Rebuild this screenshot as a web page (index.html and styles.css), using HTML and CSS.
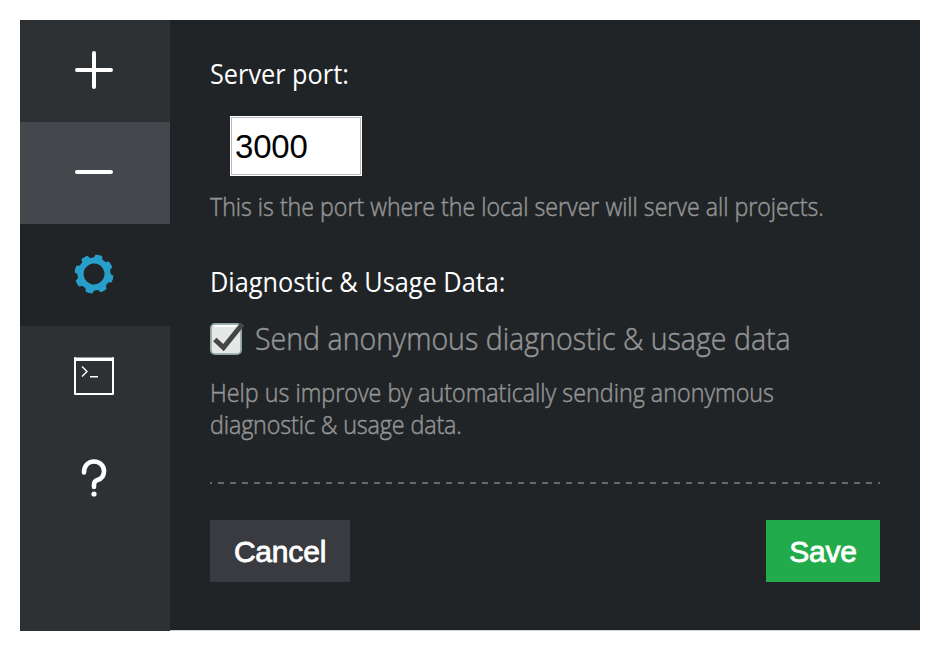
FILE: index.html
```html
<!DOCTYPE html>
<html lang="en">
<head>
<meta charset="utf-8">
<title>Settings</title>
<link rel="stylesheet" href="styles.css">
</head>
<body>
<div class="panel">
  <nav class="sidebar">
    <a class="tab"><svg width="40" height="40" viewBox="0 0 40 40"><path class="stroke bold" d="M20 3V37M3 20H37"/></svg></a>
    <a class="tab hover"><svg width="40" height="40" viewBox="0 0 40 40"><path class="stroke bold" d="M3 20H37"/></svg></a>
    <a class="tab active"><svg width="40" height="40" viewBox="0 0 40 40"><g class="gear" transform="rotate(15 20 20)"><circle cx="20" cy="20" r="13.5"/><path id="teeth" d="M14.6 7 16.600 .8Q20 .2 23.400 .8L25.400 7ZM14.600 33 16.600 39.2Q20 39.8 23.400 39.2L25.400 33Z"/><use href="#teeth" transform="rotate(45 20 20)"/><use href="#teeth" transform="rotate(90 20 20)"/><use href="#teeth" transform="rotate(135 20 20)"/></g></svg></a>
    <a class="tab"><svg width="40" height="40" viewBox="0 0 40 40"><path class="stroke" d="M1 2V38H39V2"/><path class="fill" d="M0 3Q0 1.500 1.500 1.500H38.500Q40 1.500 40 3V5H0Z"/><path class="stroke fine" d="M8 10.500L13 15.500L8 20.500M16 20.700H24"/></svg></a>
    <a class="tab"><svg width="40" height="40" viewBox="0 0 40 40"><path class="stroke bold mark" d="M10 14.500C10 8 14 3.500 20 3.500C26 3.500 30 8 30 13C30 18 27 21 23.500 22C21 22.700 20 24 20 26.500V29"/><circle class="fill" cx="20" cy="36" r="2.600"/></svg></a>
  </nav>
  <main class="content">
    <h2 class="label port">Server port:</h2>
    <input class="field" type="text" value="3000">
    <p class="help hint">This is the port where the local server will serve all projects.</p>
    <h2 class="label usage">Diagnostic &amp; Usage Data:</h2>
    <div class="check">
      <svg class="box" width="36" height="36" viewBox="0 0 36 36"><rect x=".9" y="2.900" width="30.200" height="30.200" rx="4" fill="#e4e8e7" stroke="#93a4a2" stroke-width="1.800"/><path d="M3.500 5H28.500" stroke="#fff" stroke-width="2"/><path d="M4.800 18.500L13.500 26.500L32.500 3" fill="none" stroke="#454545" stroke-width="5"/></svg>
      <span class="caption">Send anonymous diagnostic &amp; usage data</span>
    </div>
    <p class="help last">Help us improve by automatically sending anonymous<br><span class="tail">diagnostic &amp; usage data.</span></p>
    <div class="rule"></div>
    <div class="actions"><button class="btn cancel">Cancel</button><button class="btn save">Save</button></div>
  </main>
</div>
</body>
</html>
```
FILE: styles.css
```css
* { box-sizing: border-box; }
body { margin: 0; padding: 20px; background: #fff; font-family: "Open Sans", "Noto Sans", sans-serif; }
.panel { display: flex; width: 900px; height: 611px; }
.sidebar { flex: 0 0 150px; background: #2d3133; border-bottom: 1px solid #302e33; }
.tab { display: flex; align-items: center; justify-content: center; height: 102px; padding: 0 2px 2px 0; }
.hover { background: #44474b; }
.active { background: #202427; }
.tab svg { display: block; }
.stroke { fill: none; stroke: #fff; stroke-width: 2; stroke-linecap: round; stroke-linejoin: round; }
.bold { stroke-width: 4; }
.mark { stroke-width: 4.6; }
.fine { stroke-width: 1.4; stroke-linecap: butt; stroke-linejoin: miter; }
.fill { fill: #fff; }
.gear { fill: #279fca; }
.gear circle { fill: none; stroke: #279fca; stroke-width: 6; }
.content { flex: 1; min-width: 0; padding: 37px 40px 0; background: #202427; border-bottom: 1px solid #d0d0d2; }
.label { margin: 0; font-size: 28px; line-height: 32px; font-weight: 400; color: #fff; white-space: nowrap; transform: scaleX(.903); transform-origin: 0 0; }
.field { display: block; width: 132px; height: 60px; margin: 27px 0 14px 20px; padding: 1px 4px 0; border: 1px solid #fff; outline: 1px solid #bcbcbe; outline-offset: -2px; background: #fff; color: #000; font: 33px "Liberation Sans", sans-serif; letter-spacing: -.2px; }
.help { margin: 0; font-size: 25.5px; line-height: 32px; font-weight: 300; color: #949494; -webkit-text-stroke: .5px #949494; white-space: nowrap; transform-origin: 0 0; }
.hint { transform: scaleX(.908); }
.usage { margin-top: 43px; }
.check { display: flex; align-items: center; height: 40px; margin-top: 21px; gap: 9px; font-size: 32px; line-height: 40px; font-weight: 300; color: #949494; -webkit-text-stroke: .5px #949494; white-space: nowrap; }
.box { position: relative; top: 1px; flex: none; }
.caption { transform: scaleX(.892); transform-origin: 0 0; }
.last { margin-top: 18px; transform: scaleX(.914); }
.tail { letter-spacing: -.13px; }
.rule { height: 2px; margin-top: 42px; background: linear-gradient(90deg, #656969 50%, transparent 50%) 8px 0 / 12px 2px; }
.actions { display: flex; justify-content: space-between; margin-top: 36px; }
.btn { height: 62px; padding: 2px 0 0; border: 0; color: #fff; font: 30px "Liberation Sans", sans-serif; letter-spacing: -.2px; -webkit-text-stroke: .8px #fff; }
.cancel { width: 140px; background: #393b40; }
.save { width: 114px; background: #22ab4a; }
```
